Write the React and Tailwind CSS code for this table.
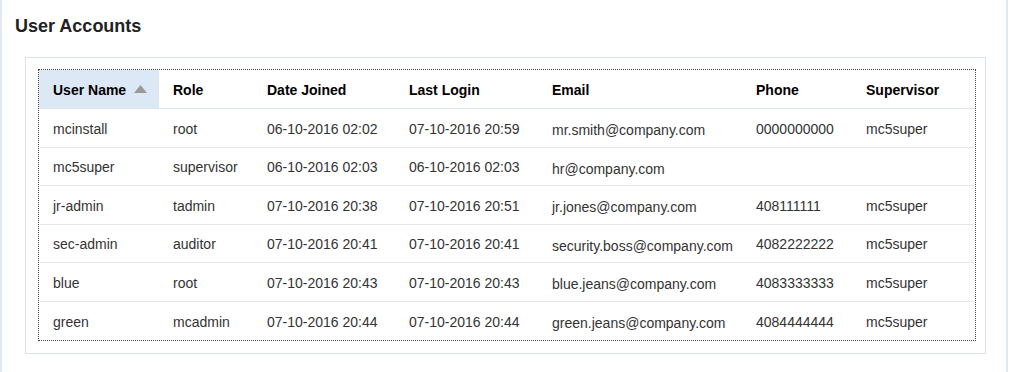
const COLUMNS = [
  { key: 'user', label: 'User Name', w: 'w-[120px]', sorted: true },
  { key: 'role', label: 'Role', w: 'w-[94px]' },
  { key: 'joined', label: 'Date Joined', w: 'w-[142px]' },
  { key: 'login', label: 'Last Login', w: 'w-[143px]' },
  { key: 'email', label: 'Email', w: 'w-[204px]' },
  { key: 'phone', label: 'Phone', w: 'w-[110px]' },
  { key: 'sup', label: 'Supervisor', w: 'flex-1' },
]

const ROWS = [
  { user: 'mcinstall', role: 'root', joined: '06-10-2016 02:02', login: '07-10-2016 20:59', email: 'mr.smith@company.com', phone: '0000000000', sup: 'mc5super' },
  { user: 'mc5super', role: 'supervisor', joined: '06-10-2016 02:03', login: '06-10-2016 02:03', email: 'hr@company.com', phone: '', sup: '' },
  { user: 'jr-admin', role: 'tadmin', joined: '07-10-2016 20:38', login: '07-10-2016 20:51', email: 'jr.jones@company.com', phone: '408111111', sup: 'mc5super' },
  { user: 'sec-admin', role: 'auditor', joined: '07-10-2016 20:41', login: '07-10-2016 20:41', email: 'security.boss@company.com', phone: '4082222222', sup: 'mc5super' },
  { user: 'blue', role: 'root', joined: '07-10-2016 20:43', login: '07-10-2016 20:43', email: 'blue.jeans@company.com', phone: '4083333333', sup: 'mc5super' },
  { user: 'green', role: 'mcadmin', joined: '07-10-2016 20:44', login: '07-10-2016 20:44', email: 'green.jeans@company.com', phone: '4084444444', sup: 'mc5super' },
]

export default function App() {
  return (
    <div className="w-[1008px] h-[372px] bg-white border-x-2 border-[#e1e8f0] font-['Liberation_Sans',Arial,sans-serif]">
      <h1 className="pl-[13px] pt-[15px] h-[55px] text-[18px] leading-[22px] font-bold text-[#222]">User Accounts</h1>

      <div className="ml-[23px] mt-[2px] w-[961px] border border-[#dbe2ea] pt-[11px] pl-[12px] pr-[9px] pb-[12px]">
        <div className="border border-dotted border-[#444] text-[14px]">
          {/* header */}
          <div className="flex h-[39px] border-b border-[#dde3ea] text-black font-bold">
            {COLUMNS.map(c => (
              <div key={c.key} className={`${c.w} flex items-center pl-[14px] pt-[2px] ${c.sorted ? 'bg-[#dce8f5]' : ''}`}>
                {c.label}
                {c.sorted && (
                  <svg width="13" height="8" viewBox="0 0 13 8" className="ml-[8px] -mt-[2px]">
                    <polygon points="6.5,0 13,8 0,8" fill="#9a9a9a" />
                  </svg>
                )}
              </div>
            ))}
          </div>

          {/* rows */}
          {ROWS.map((r, i) => (
            <div
              key={r.user}
              className={`flex h-[38.5px] mx-[1px] text-[#333] ${i < ROWS.length - 1 ? 'border-b border-[#e8e8e8]' : ''}`}
            >
              {COLUMNS.map((c, j) => (
                <div
                  key={c.key}
                  className={`${j === 0 ? 'w-[119px] pl-[13px]' : c.w} flex items-center ${j === 0 ? '' : 'pl-[14px]'} ${c.key === 'email' ? 'pt-[6px]' : 'pt-[3px]'}`}
                >
                  {r[c.key]}
                </div>
              ))}
            </div>
          ))}
        </div>
      </div>
    </div>
  )
}
